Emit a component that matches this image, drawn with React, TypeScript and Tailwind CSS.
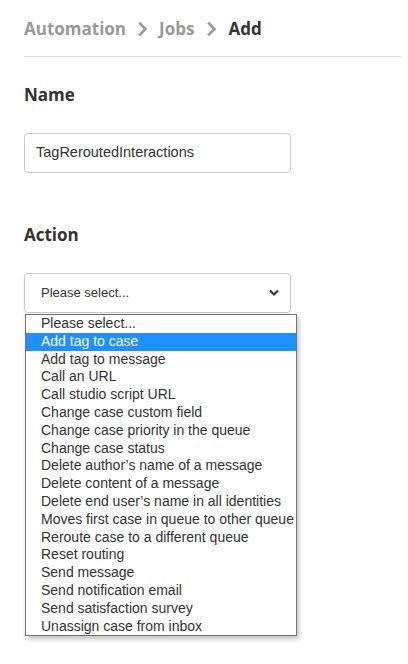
import React from "react";

const options = [
  "Please select...",
  "Add tag to case",
  "Add tag to message",
  "Call an URL",
  "Call studio script URL",
  "Change case custom field",
  "Change case priority in the queue",
  "Change case status",
  "Delete author\u2019s name of a message",
  "Delete content of a message",
  "Delete end user\u2019s name in all identities",
  "Moves first case in queue to other queue",
  "Reroute case to a different queue",
  "Reset routing",
  "Send message",
  "Send notification email",
  "Send satisfaction survey",
  "Unassign case from inbox",
];

function Chevron() {
  return (
    <svg width="10" height="14" viewBox="0 0 10 14" className="shrink-0">
      <path d="M2 1.5 L7.5 7 L2 12.5" fill="none" stroke="#9a9a9a" strokeWidth="2.6" strokeLinecap="square" strokeLinejoin="miter" />
    </svg>
  );
}

export default function App() {
  return (
    <div className="w-[408px] h-[664px] bg-white relative overflow-hidden" style={{ fontFamily: "'Open Sans', sans-serif" }}>
      <div className="pl-6 pr-[7px]">
        <div className="h-[56px] flex items-center pt-[1px]">
          <div className="flex items-center text-[17px] font-bold leading-none">
            <span className="text-[#999999]">Automation</span>
            <span className="ml-[12px] mr-[11px] flex items-center"><Chevron /></span>
            <span className="text-[#999999]">Jobs</span>
            <span className="ml-[13px] mr-[11px] flex items-center"><Chevron /></span>
            <span className="text-[#333333]">Add</span>
          </div>
        </div>
        <div className="h-px bg-[#e3e3e3]" />
        <div className="pt-[26px] text-[17px] font-bold text-[#333333] leading-[24px]">Name</div>
        <div className="mt-[26px] w-[267px] h-[40px] border border-[#cccccc] rounded-[4px] flex items-center pl-[11px]">
          <span className="text-[14.5px] text-[#333333]" style={{ fontFamily: "'Liberation Sans', Arial, sans-serif" }}>TagReroutedInteractions</span>
        </div>
        <div className="pt-[50px] text-[17px] font-bold text-[#333333] leading-[24px]">Action</div>
        <div className="mt-[26px] relative w-[267px]">
          <div className="h-[40px] border border-[#cccccc] rounded-[4px] flex items-center pl-[16px] pr-[8px] shadow-[0_1px_2px_rgba(0,0,0,0.08)]" style={{ fontFamily: "'Liberation Sans', Arial, sans-serif" }}>
            <span className="flex-1 text-[13px] text-[#333333]">Please select...</span>
            <svg width="12" height="8" viewBox="0 0 12 8" className="mr-[2px]">
              <path d="M2 1.5 L6 5.5 L10 1.5" fill="none" stroke="#333333" strokeWidth="2.2" />
            </svg>
          </div>
          <div
            className="absolute left-[1px] top-[41px] w-[272px] bg-white border border-[#767676] shadow-[2px_3px_5px_rgba(0,0,0,0.25)] z-10"
            style={{ fontFamily: "'Liberation Sans', Arial, sans-serif" }}
          >
            {options.map((o, i) => (
              <div
                key={o}
                className={
                  "h-[17.8px] leading-[17.8px] pl-[15px] text-[14px] whitespace-nowrap overflow-hidden " +
                  (i === 1 ? "bg-[#1e90ff] text-white" : "text-[#333333]")
                }
              >
                {o}
              </div>
            ))}
          </div>
        </div>
      </div>
    </div>
  );
}
